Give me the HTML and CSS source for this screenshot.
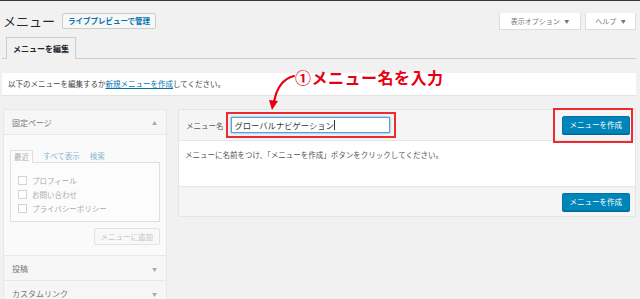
FILE: index.html
```html
<!DOCTYPE html>
<html lang="ja">
<head>
    <meta charset="UTF-8">
    <meta name="viewport" content="width=device-width, initial-scale=1.0">
    <title>メニュー</title>
    <link rel="stylesheet" href="styles.css">
</head>
<body>
    <div class="admin-edge"></div>

    <div class="wrap">
        <div class="screen-links">
            <button class="screen-btn wide">表示オプション <span class="tri">▼</span></button>
            <button class="screen-btn">ヘルプ <span class="tri">▼</span></button>
        </div>

        <div class="title-row">
            <h1>メニュー</h1>
            <a class="title-action">ライブプレビューで管理</a>
        </div>

        <div class="nav-tabs">
            <span class="nav-tab">メニューを編集</span>
        </div>

        <div class="notice">以下のメニューを編集するか<a class="link">新規メニューを作成</a>してください。</div>

        <div class="editor">
            <!-- 左側: 追加するメニュー項目 -->
            <div class="side">
                <div class="side-title">固定ページ <span class="tri up">▲</span></div>
                <div class="side-body">
                    <div class="mini-tabs">
                        <span class="mini-tab active">最近</span>
                        <span class="mini-tab">すべて表示</span>
                        <span class="mini-tab">検索</span>
                    </div>
                    <div class="mini-panel">
                        <label class="check-row"><span class="box"></span>プロフィール</label>
                        <label class="check-row"><span class="box"></span>お問い合わせ</label>
                        <label class="check-row"><span class="box"></span>プライバシーポリシー</label>
                    </div>
                    <div class="add-row">
                        <span class="btn-ghost">メニューに追加</span>
                    </div>
                </div>
                <div class="side-title">投稿 <span class="tri">▼</span></div>
                <div class="side-title">カスタムリンク <span class="tri">▼</span></div>
            </div>

            <!-- 右側: メニュー構造 -->
            <div class="menu-box">
                <div class="menu-head">
                    <span class="field-label">メニュー名</span>
                    <span class="marked marked-input">
                        <span class="name-input">グローバルナビゲーション<span class="caret"></span></span>
                    </span>
                    <span class="marked marked-btn">
                        <span class="btn-primary">メニューを作成</span>
                    </span>
                </div>
                <div class="menu-body">メニューに名前をつけ、「メニューを作成」ボタンをクリックしてください。</div>
                <div class="menu-foot">
                    <span class="btn-primary">メニューを作成</span>
                </div>
            </div>
        </div>
    </div>

    <!-- 注釈 -->
    <div class="callout">①メニュー名を入力</div>
    <svg class="callout-arrow" width="40" height="44" viewBox="0 0 40 44">
        <path d="M32 6 Q16 10 12 32" fill="none" stroke="#e60012" stroke-width="2.2" stroke-linecap="round"/>
        <polygon points="7,30 16,31 10,40" fill="#e60012"/>
    </svg>
</body>
</html>
```

FILE: styles.css
```css
* {
    box-sizing: border-box;
}

body {
    margin: 0;
    position: relative;
    height: 299px;
    overflow: hidden;
    background: #f1f1f1;
    color: #444;
    font-family: "Noto Sans CJK JP", "Noto Sans", sans-serif;
    font-size: 7.5px;
}

.admin-edge {
    height: 1px;
    background: #32373c;
}

.wrap {
    padding: 0 4px 0 2px;
}

/* 右上のボタン */
.screen-links {
    float: right;
    display: flex;
    gap: 4px;
}

.screen-btn {
    width: 51px;
    height: 17px;
    padding: 0;
    background: #fff;
    border: 1px solid #ddd;
    border-top: none;
    color: #72777c;
    font-family: inherit;
    font-size: 7px;
    line-height: 15px;
    white-space: nowrap;
    text-align: center;
}

.screen-btn.wide {
    width: 82px;
}

.tri {
    font-size: 5px;
    margin-left: 3px;
    vertical-align: 1px;
}

.title-row {
    display: flex;
    align-items: center;
    gap: 7px;
    margin-top: 12px;
    padding-left: 1px;
}

h1 {
    margin: 0;
    font-size: 13px;
    font-weight: 400;
    line-height: 16px;
    color: #23282d;
}

.title-action {
    height: 16px;
    padding: 0 5px;
    border: 1px solid #ccc;
    border-radius: 2px;
    background: #f7f7f7;
    color: #0073aa;
    font-weight: 600;
    line-height: 14px;
}

.nav-tabs {
    margin-top: 8px;
    padding-left: 4px;
    border-bottom: 1px solid #ccc;
    height: 22px;
}

.nav-tab {
    display: inline-block;
    height: 22px;
    padding: 0 6px;
    border: 1px solid #ccc;
    border-bottom: none;
    background: #f1f1f1;
    color: #23282d;
    font-size: 8px;
    font-weight: 700;
    line-height: 21px;
}

.notice {
    margin-top: 14px;
    height: 22px;
    padding-left: 6px;
    background: #fff;
    box-shadow: 0 1px 1px rgba(0, 0, 0, 0.06);
    line-height: 22px;
}

.link {
    color: #0073aa;
    text-decoration: underline;
}

.editor {
    display: flex;
    align-items: flex-start;
    gap: 11px;
    margin-top: 14px;
    padding-left: 1px;
}

/* 左側 */
.side {
    width: 164px;
    border: 1px solid #e8e8e8;
    background: #fafafa;
    color: #999;
}

.side-title {
    display: flex;
    justify-content: space-between;
    align-items: center;
    height: 25px;
    padding: 0 9px 0 8px;
    background: #f6f6f6;
    border-bottom: 1px solid #e8e8e8;
    color: #777;
    font-size: 8px;
}

.side-title .tri {
    color: #aaa;
}

.side-body {
    padding: 15px 6px 10px 6px;
    border-bottom: 1px solid #e8e8e8;
}

.mini-tabs {
    display: flex;
    gap: 10px;
    height: 13px;
}

.mini-tab {
    line-height: 12px;
    color: #89b9d6;
}

.mini-tab.active {
    padding: 0 3px;
    border: 1px solid #e0e0e0;
    border-bottom: none;
    background: #fcfcfc;
    color: #aaa;
}

.mini-panel {
    height: 60px;
    margin-top: -1px;
    padding: 10px 7px 0;
    border: 1px solid #e0e0e0;
    background: #fcfcfc;
}

.check-row {
    display: flex;
    align-items: center;
    gap: 5px;
    height: 14px;
    color: #aaa;
}

.box {
    width: 9px;
    height: 9px;
    border: 1px solid #d4d4d4;
    background: #fff;
}

.add-row {
    display: flex;
    justify-content: flex-end;
    margin-top: 6px;
}

.btn-ghost {
    height: 17px;
    padding: 0 6px;
    border: 1px solid #e2e2e2;
    border-radius: 2px;
    background: #f8f8f8;
    color: #c4c4c4;
    line-height: 15px;
}

/* 右側 */
.menu-box {
    flex: 1;
    border: 1px solid #e5e5e5;
    background: #fff;
}

.menu-head {
    display: flex;
    align-items: center;
    height: 31px;
    padding: 0 5px 0 7px;
    background: #f5f5f5;
    border-bottom: 1px solid #e5e5e5;
}

.field-label {
    color: #555;
    margin-right: 7px;
}

.marked {
    position: relative;
    display: inline-flex;
}

.marked::after {
    content: "";
    position: absolute;
    border: 2px solid #ec2a30;
}

.marked-input::after {
    top: -5px;
    bottom: -5px;
    left: -5px;
    right: -6px;
}

.marked-btn {
    margin-left: auto;
}

.marked-btn::after {
    top: -8px;
    bottom: -9px;
    left: -9px;
    right: -3px;
}

.name-input {
    display: flex;
    align-items: center;
    width: 159px;
    height: 16px;
    padding-left: 3px;
    border: 1px solid #5b9dd9;
    box-shadow: 0 0 2px rgba(30, 140, 190, 0.8);
    background: #fff;
    color: #32373c;
    font-size: 8.3px;
}

.caret {
    width: 1px;
    height: 10px;
    background: #333;
}

.btn-primary {
    display: inline-block;
    height: 18px;
    padding: 0 7px;
    border: 1px solid #0073aa;
    border-radius: 2px;
    background: #0085ba;
    box-shadow: 0 1px 0 #006799;
    color: #fff;
    line-height: 16px;
    white-space: nowrap;
}

.menu-body {
    height: 45px;
    padding: 8px 6px 0;
    color: #555;
}

.menu-foot {
    display: flex;
    justify-content: flex-end;
    align-items: center;
    height: 30px;
    padding: 0 5px;
    background: #f5f5f5;
    border-top: 1px solid #e5e5e5;
}

/* 注釈 */
.callout {
    position: absolute;
    left: 295px;
    top: 68px;
    color: #e60012;
    font-size: 16px;
    font-weight: 700;
    letter-spacing: 0.5px;
    line-height: 18px;
}

.callout-arrow {
    position: absolute;
    left: 262px;
    top: 70px;
}
```
